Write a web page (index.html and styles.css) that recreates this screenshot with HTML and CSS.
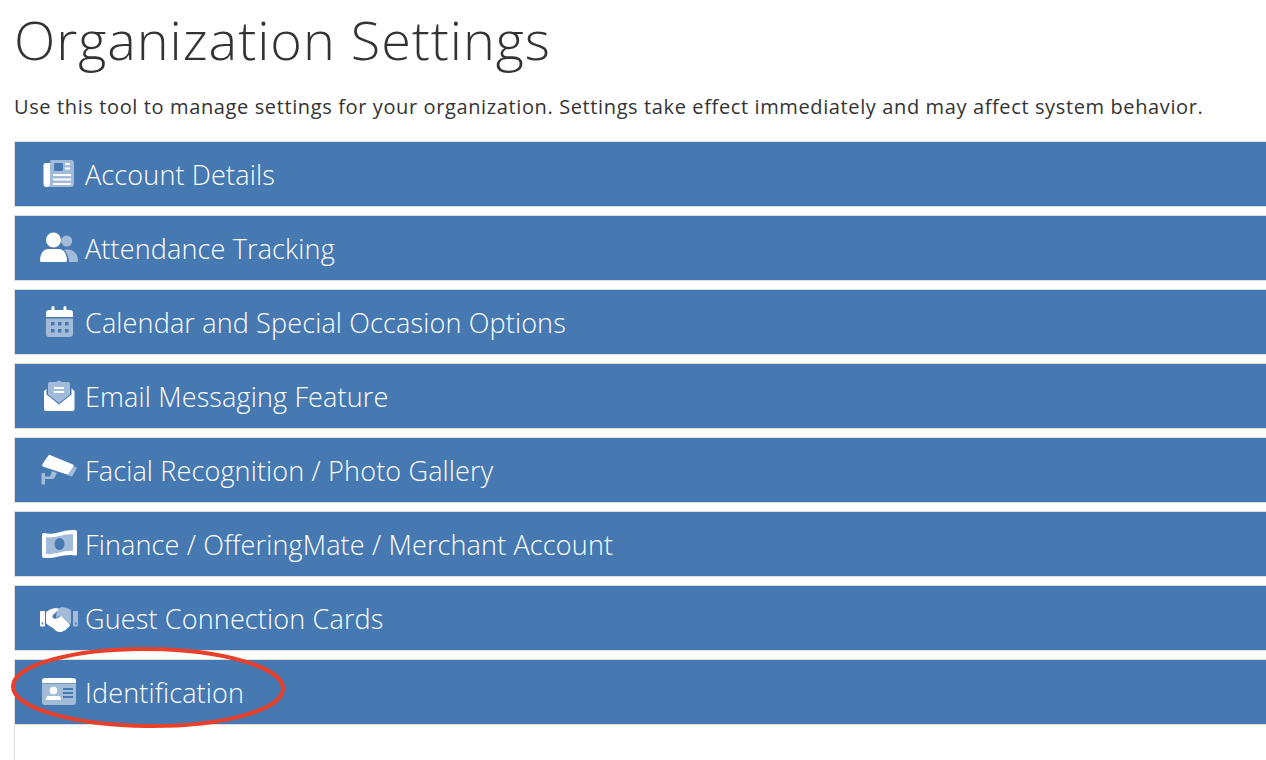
FILE: index.html
```html
<!DOCTYPE html>
<html lang="en">
<head>
<meta charset="utf-8">
<title>Organization Settings</title>
<link rel="stylesheet" href="styles.css">
</head>
<body>
<main class="page">
  <h1 class="title">Organization Settings</h1>
  <p class="lead">Use this tool to manage settings for your organization. Settings take effect immediately and may affect system behavior.</p>
  <div class="accordion">
    <section class="panel"><div class="head">
      <svg class="icon" viewBox="0 0 38 34"><path class="fg" d="M5.500 6H10v24H6.500a3 3 0 0 1-3-3V8a2 2 0 0 1 2-2z"/><path class="dim" d="M10 5a2 2 0 0 1 2-2h19a3 3 0 0 1 3 3v21a3 3 0 0 1-3 3H7.500a4 4 0 0 0 2.500-3.500z"/><path class="fg" d="M25 6h5v2h-5zM25 10.500h5v2h-5zM13 17h18v2H13zM13 21.500h18v2H13zM13 26h18v2H13z"/><rect class="bg" x="14" y="6" width="9" height="8" rx="1"/></svg>
      <span class="label">Account Details</span></div></section>
    <section class="panel"><div class="head">
      <svg class="icon" viewBox="0 0 38 34"><circle class="dim" cx="26.700" cy="10" r="5.500"/><path class="dim" d="M24 19c8-2 14 3 14 11a1 1 0 0 1-1 1H29c0-5-2-9-5-12z"/><circle class="fg" cx="13.500" cy="9" r="7.500"/><path class="fg" d="M8 18h11c5 0 8 6 8 11.500a1.500 1.500 0 0 1-1.500 1.500H1.500A1.500 1.500 0 0 1 0 29.500C0 24 3 18 8 18z"/></svg>
      <span class="label">Attendance Tracking</span></div></section>
    <section class="panel"><div class="head">
      <svg class="icon" viewBox="0 0 38 34"><path class="fg" d="M13 1a1.500 1.500 0 0 1 1.500 1.500V5h9V2.500a1.500 1.500 0 0 1 3 0V5H30a3 3 0 0 1 3 3v4H6V8a3 3 0 0 1 3-3h2.500V2.500A1.500 1.500 0 0 1 13 1z"/><path class="dim" d="M6 13.500h27V29a3 3 0 0 1-3 3H9a3 3 0 0 1-3-3z"/><path class="bg" d="M11 17h3.500v3.500H11zM18 17h3.500v3.500H18zM25 17h3.500v3.500H25zM11 24h3.500v3.500H11zM18 24h3.500v3.500H18zM25 24h3.500v3.500H25z"/></svg>
      <span class="label">Calendar and Special Occasion Options</span></div></section>
    <section class="panel"><div class="head">
      <svg class="icon" viewBox="0 0 38 34"><path class="fg" d="M8 9h23l3 2.500a1.500 1.500 0 0 1 .5 1V30a2 2 0 0 1-2 2H6a2 2 0 0 1-2-2V12.500a1.500 1.500 0 0 1 .5-1z"/><path class="bg" d="M6.500 8h25v7.500L19 25.500l-12.500-10z"/><path class="dim" d="M8 5a2 2 0 0 1 2-2h6l3-1.500L22 3h6a2 2 0 0 1 2 2v10.500L19 24 8 15.500z"/><path class="fg" d="M14 8h10v2H14zM14 12h10v2H14z"/></svg>
      <span class="label">Email Messaging Feature</span></div></section>
    <section class="panel"><div class="head">
      <svg class="icon" viewBox="0 0 38 34"><path class="fg" d="M10 2l23 9.500a1.500 1.500 0 0 1 .5 2L29 21a2 2 0 0 1-2 .500L4 14c-2-.5-2-2-1.500-3L8 3a2 2 0 0 1 2-1z"/><path class="dim" d="M34 13.500l2 .700a1 1 0 0 1 .5 1.500L32 23.500l-5-1.500zM12 18l5 2-2.500 5a2 2 0 0 1-2 1H5v4.500a1 1 0 0 1-1 1H2.500a1 1 0 0 1-1-1V21a1 1 0 0 1 1-1H4a1 1 0 0 1 1 1v2.500h5z"/></svg>
      <span class="label">Facial Recognition / Photo Gallery</span></div></section>
    <section class="panel"><div class="head">
      <svg class="icon" viewBox="0 0 38 34"><path class="fg" d="M4 6c10 3 19-4 31-3a2 2 0 0 1 2 2v22a1.500 1.500 0 0 1-1.500 1.500C24 26 16 32 4 31a2 2 0 0 1-2-2V8a2 2 0 0 1 2-2z"/><path class="dim" d="M6 10c8 2 16-3 27-3v17c-9-1-17 4-27 3z"/><ellipse class="bg" cx="19.500" cy="17" rx="5" ry="6"/></svg>
      <span class="label">Finance / OfferingMate / Merchant Account</span></div></section>
    <section class="panel"><div class="head">
      <svg class="icon" viewBox="0 0 38 34"><path class="fg" d="M0 10h5v14.500a1 1 0 0 1-1 1H1a1 1 0 0 1-1-1z"/><path class="bg" d="M1.800 21.500h1.500v2H1.800z"/><path class="dim" d="M33 10h5v14.500a1 1 0 0 1-1 1h-3a1 1 0 0 1-1-1z"/><path class="bg" d="M35 21.500h1.500v2H35z"/><path class="dim" d="M17 8l5-2 5 1 4 2v13l-2 2-9-9-4 2z"/><path class="fg" d="M6 11l5-3 5-1 3 1-6 6c-2 3 2 5 5 3l3-2 9 9-1 2-2 1-1 2-3 1-1 1h-3l-3-1-3-3-5-3-2-2z"/></svg>
      <span class="label">Guest Connection Cards</span></div></section>
    <section class="panel open"><div class="head">
      <svg class="icon" viewBox="0 0 38 34"><path class="fg" d="M5 3h28a3 3 0 0 1 3 3v2H2V6a3 3 0 0 1 3-3z"/><path class="dim" d="M2 8.500h34V27a3 3 0 0 1-3 3H5a3 3 0 0 1-3-3z"/><circle class="fg" cx="13.500" cy="15.500" r="3.800"/><path class="fg" d="M9 21h9a3 3 0 0 1 3 3v1H6v-1a3 3 0 0 1 3-3z"/><path class="bg" d="M23 13h10v2H23zM23 17h10v2H23zM23 21h10v2H23z"/></svg>
      <span class="label">Identification</span></div>
      <div class="body"></div></section>
  </div>
</main>
<svg class="mark" viewBox="0 0 300 100" width="300" height="100"><ellipse cx="148" cy="47.500" rx="135" ry="38.500" transform="rotate(0.5 148 47)"/></svg>
</body>
</html>
```
FILE: styles.css
```css
html, body { margin: 0; padding: 0; height: 100%; overflow: hidden; background: #fff; }
body { font-family: "Open Sans", "Noto Sans", sans-serif; color: #333; position: relative; }
.page { padding-left: 14px; }
.title { margin: 0 0 14px; font-weight: 300; font-size: 54px; line-height: 78px; letter-spacing: 0.95px; height: 78px; color: #333; }
.lead { margin: 0; font-size: 20px; line-height: 30px; letter-spacing: 0.62px; padding-left: 0; height: 49px; color: #333; white-space: nowrap; }
.accordion { display: flex; flex-direction: column; gap: 8px; }
.panel { border: 1px solid #ddd; border-right: 0; }
.panel.open { border-bottom: 0; }
.head { height: 64px; background: #4678b2; display: flex; align-items: center; color: #fff; padding-left: 25px; }
.icon { width: 38px; height: 34px; margin-right: 7px; flex: none; }
.label { font-weight: 300; font-size: 27px; letter-spacing: 0.15px; white-space: nowrap; }
.fg { fill: #fff; }
.dim { fill: #a2bbd9; }
.bg { fill: #4678b2; }
.body { height: 60px; border-top: 1px solid #ddd; background: #fff; }
.mark { position: absolute; left: 0; top: 640px; overflow: visible; }
.mark ellipse { fill: none; stroke: #e8402a; stroke-width: 4; }
```
